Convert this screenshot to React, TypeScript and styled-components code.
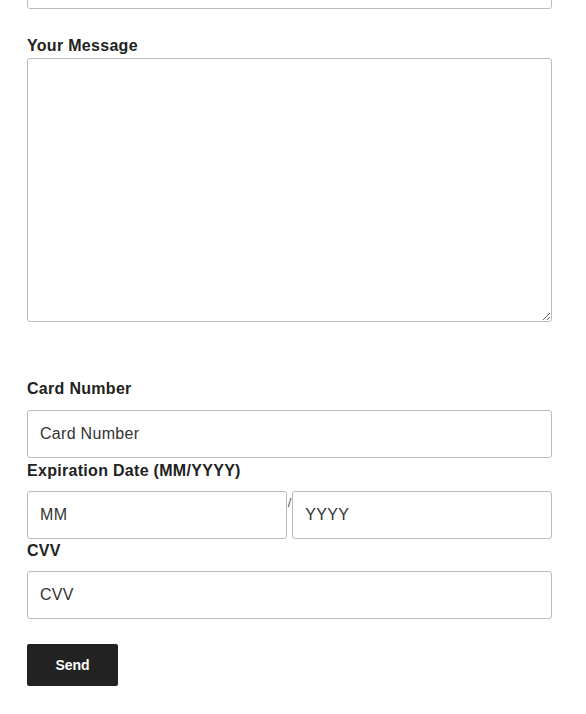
import styled, { createGlobalStyle } from "styled-components";

const GlobalStyle = createGlobalStyle`
  body {
    margin: 0;
    background: #fff;
    font-family: "Liberation Sans", Arial, sans-serif;
    color: #222;
  }
`;

const Page = styled.div`
  padding: 0 35px 0 27px;
  overflow: hidden;
  height: 714px;
`;

const Form = styled.form`
  width: 525px;
  margin-top: -39px;
`;

const Field = styled.div<{ $gap?: number }>`
  margin-top: ${(p) => p.$gap ?? 0}px;
`;

const Label = styled.label<{ $space?: number }>`
  display: block;
  font-size: 16px;
  line-height: 20px;
  font-weight: 700;
  letter-spacing: 0.3px;
  color: #222;
  margin-bottom: ${(p) => p.$space ?? 10}px;
`;

const Input = styled.input`
  box-sizing: border-box;
  display: block;
  width: 100%;
  height: 48px;
  padding: 0 12px;
  border: 1px solid #bbb;
  border-radius: 3px;
  background: #fff;
  font-family: "Liberation Sans", Arial, sans-serif;
  font-size: 16px;
  letter-spacing: 0.3px;
  color: #333;
  outline: none;

  &::placeholder {
    color: #333;
    opacity: 1;
  }
`;

const Message = styled.textarea`
  box-sizing: border-box;
  display: block;
  width: 100%;
  height: 264px;
  padding: 12px;
  border: 1px solid #bbb;
  border-radius: 3px;
  font-family: "Liberation Sans", Arial, sans-serif;
  font-size: 16px;
  color: #333;
  resize: vertical;
  outline: none;
`;

const DateRow = styled.div`
  display: flex;
  align-items: flex-start;
  gap: 1px;

  & > input {
    flex: 1;
    min-width: 0;
  }
`;

const Slash = styled.span`
  font-size: 13px;
  line-height: 13px;
  margin-top: 5px;
  color: #555;
`;

const SendButton = styled.button`
  display: block;
  margin-top: 25px;
  width: 91px;
  height: 42px;
  border: none;
  border-radius: 2px;
  background: #222;
  color: #fff;
  font-family: "Liberation Sans", Arial, sans-serif;
  font-size: 14px;
  font-weight: 700;
  cursor: pointer;
`;

export default function App() {
  return (
    <>
      <GlobalStyle />
      <Page>
        <Form onSubmit={(e) => e.preventDefault()}>
          <Input type="email" aria-label="Your Email" />

          <Field $gap={27}>
            <Label $space={2}>Your Message</Label>
            <Message />
          </Field>

          <Field $gap={57}>
            <Label $space={11}>Card Number</Label>
            <Input placeholder="Card Number" />
          </Field>

          <Field $gap={3}>
            <Label $space={10}>Expiration Date (MM/YYYY)</Label>
            <DateRow>
              <Input placeholder="MM" />
              <Slash>/</Slash>
              <Input placeholder="YYYY" />
            </DateRow>
          </Field>

          <Field $gap={2}>
            <Label $space={10}>CVV</Label>
            <Input placeholder="CVV" />
          </Field>

          <SendButton type="submit">Send</SendButton>
        </Form>
      </Page>
    </>
  );
}
